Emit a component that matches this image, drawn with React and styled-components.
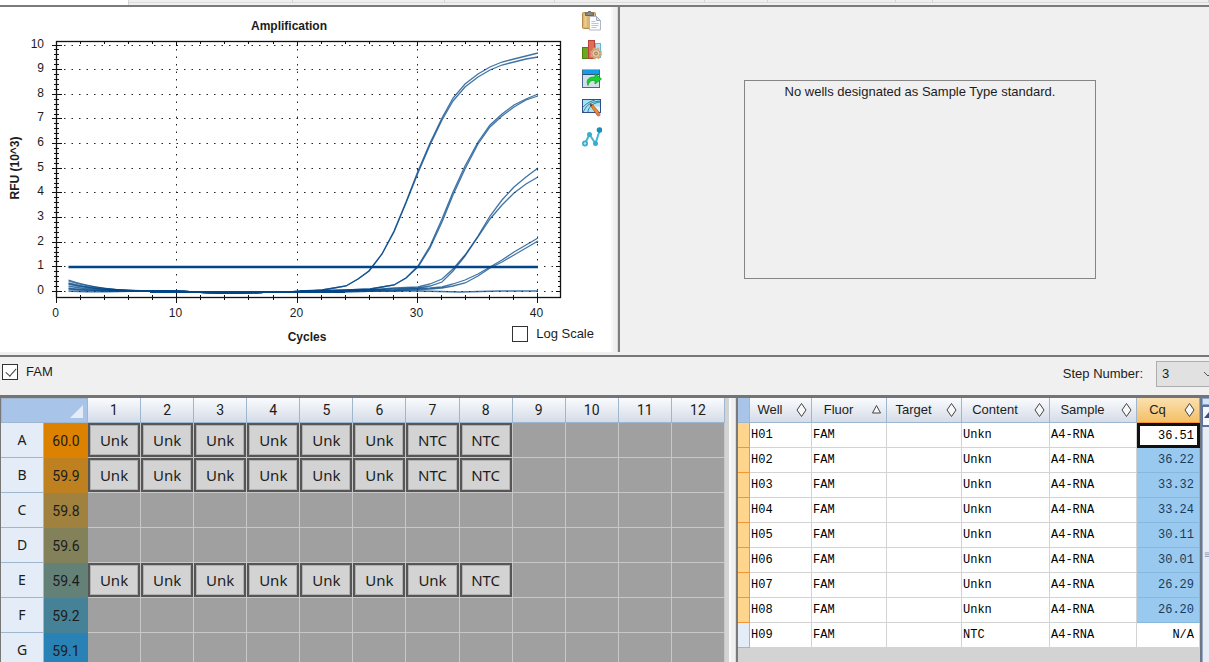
import React, { useState } from "react";
import styled, { createGlobalStyle } from "styled-components";

const GlobalStyle = createGlobalStyle`
  * {
    box-sizing: border-box;
  }
  body {
    margin: 0;
    background: #f0f0f0;
    color: #1c1c1c;
    font-family: "Liberation Sans", Arial, sans-serif;
    font-size: 13px;
    line-height: 16px;
  }
`;

const Window = styled.div`
  height: 100vh;
  display: flex;
  flex-direction: column;
  overflow: hidden;
`;
const TabStrip = styled.div`
  display: flex;
  flex: none;
  height: 5px;
  padding-bottom: 2px;
`;
const Tab = styled.div`
  flex: ${(p) => p.$grow} 1 0;
  height: ${(p) => (p.$active ? 5 : 3)}px;
  background: ${(p) => (p.$active ? "#fff" : "#efefef")};
  border-right: 1px solid #d4d4d4;
  border-bottom: ${(p) => (p.$active ? 0 : 1)}px solid #dcdcdc;
`;
const TopPanels = styled.div`
  display: grid;
  flex: none;
  grid-template-columns: minmax(0, 611fr) 7px minmax(0, 591fr);
  border-top: 2px solid #7a7a7a;
`;
const Splitter = styled.div`
  background: #f0f0f0;
  border-left: 2px solid #f9f9f9;
  border-right: 1px solid #dadada;
`;
const ChartPanel = styled.section`
  position: relative;
  display: flex;
  justify-content: space-between;
  background: #fff;
`;
const Plot = styled.svg`
  display: block;
  flex: none;
  font-family: "Liberation Sans", Arial, sans-serif;
  fill: #1c1c1c;
`;
const Tools = styled.div`
  display: flex;
  flex-direction: column;
  gap: 9px;
  padding: 4px 9px 0 0;
`;
const ToolButton = styled.button`
  width: 20px;
  height: 20px;
  padding: 0;
  border: 0;
  background: none;
  svg {
    display: block;
  }
`;
const LogScale = styled.div`
  position: absolute;
  right: 17px;
  bottom: 10px;
`;
const CheckLabel = styled.label`
  display: flex;
  align-items: center;
  gap: 8px;
`;
const Checkbox = styled.input`
  appearance: none;
  position: relative;
  flex: none;
  width: 16px;
  height: 16px;
  margin: 0;
  border: 1px solid #333;
  background: #fff;
  &:checked::after {
    content: "";
    position: absolute;
    left: 5px;
    top: 1px;
    width: 5px;
    height: 9px;
    border: solid #444;
    border-width: 0 1px 1px 0;
    transform: rotate(42deg);
  }
`;
const StandardPanel = styled.section`
  display: flex;
  justify-content: center;
  align-items: flex-start;
  padding: 73px 0 0 11px;
  border-left: 2px solid #7d7d7d;
`;
const Message = styled.p`
  width: 61%;
  height: 199px;
  margin: 0;
  padding-top: 3px;
  border: 1px solid #858585;
  text-align: center;
`;
const Toolbar = styled.div`
  display: flex;
  flex: none;
  align-items: center;
  justify-content: space-between;
  height: 37px;
  margin-top: 3px;
  padding: 0 0 6px 2px;
  border-top: 2px solid #777;
  overflow: hidden;
`;
const StepField = styled.div`
  display: flex;
  align-items: center;
  gap: 13px;
  margin: 4px -10px 0 0;
`;
const SelectBox = styled.div`
  position: relative;
  svg {
    position: absolute;
    right: 6px;
    top: 9px;
    pointer-events: none;
  }
`;
const Select = styled.select`
  appearance: none;
  display: block;
  width: 63px;
  height: 26px;
  padding: 0 5px;
  border: 1px solid #adadad;
  border-radius: 0;
  background: #e1e1e1;
  color: #1c1c1c;
  font: inherit;
`;
const Workspace = styled.div`
  display: grid;
  flex: 1;
  min-height: 0;
  grid-template-columns: minmax(0, 729fr) 7px minmax(0, 473fr);
  margin-top: 3px;
  border-top: 3px solid #747474;
`;
const PlatePanel = styled.section`
  overflow: hidden;
  border-left: 1px solid #777;
  background: #d3d3d3;
`;
const PlateTable = styled.table`
  width: calc(100% - 4px);
  table-layout: fixed;
  border-collapse: separate;
  border-spacing: 0;
  font-family: "Noto Sans", "Open Sans", sans-serif;
  font-size: 14px;
  line-height: 20px;
  text-align: center;
  th,
  td {
    padding: 0;
    font-weight: 400;
  }
`;
const Corner = styled.th`
  height: 25px;
  background: #a9c4e9;
  border: 1px solid #9eb6ce;
  svg {
    display: block;
    margin: 3px 3px 0 auto;
  }
`;
const ColumnHead = styled.th`
  height: 25px;
  background: linear-gradient(#f9fbfd, #d5dce8);
  border-right: 1px solid #9eb6ce;
  border-bottom: 1px solid #9eb6ce;
  font-family: Roboto, sans-serif;
`;
const RowHead = styled.th`
  height: 35px;
  background: #e4ecf7;
  border-right: 1px solid #9eb6ce;
  border-bottom: 1px solid #9eb6ce;
`;
const Temperature = styled.td`
  background: ${(p) => p.$color};
  font-family: Roboto, sans-serif;
`;
const WellCell = styled.td`
  height: 35px;
  background: #a0a0a0;
  border-right: 1px solid #c8c8c8;
  border-bottom: 1px solid #c8c8c8;
`;
const Well = styled.div`
  height: 34px;
  padding-top: 5px;
  border: 2px solid #565656;
  box-shadow: inset 0 0 0 1px #b0b0b0;
  background: #d3d3d3;
  font-size: 15px;
`;
const ResultsPanel = styled.section`
  display: flex;
  overflow: hidden;
  border-left: 2px solid #7a7a7a;
  background: #d3d3d3;
`;
const ResultsScroll = styled.div`
  flex: 1;
  min-width: 0;
`;
const ResultsTable = styled.table`
  width: 100%;
  table-layout: fixed;
  border-collapse: separate;
  border-spacing: 0;
`;
const SortHead = styled.th`
  height: 25px;
  padding: 0 4px 0 2px;
  background: ${(p) =>
    p.$active ? "linear-gradient(#fbe0b0, #f3c066)" : "linear-gradient(#f9fbfd, #d5dce8)"};
  border-right: 1px solid ${(p) => (p.$active ? "#f29536" : "#9eb6ce")};
  border-bottom: 1px solid ${(p) => (p.$active ? "#f29536" : "#9eb6ce")};
  font-weight: 400;
`;
const HeadContent = styled.div`
  display: flex;
  align-items: center;
  span {
    flex: 1;
    padding-right: 8px;
    text-align: center;
  }
`;
const Gutter = styled.th`
  padding: 0;
  background: ${(p) => (p.$head ? "#a9c4e9" : p.$selected ? "#ffd58d" : "#e4ecf7")};
  border-right: 1px solid ${(p) => (p.$selected ? "#f29536" : "#9eb6ce")};
  border-bottom: 1px solid ${(p) => (p.$selected ? "#f29536" : "#9eb6ce")};
`;
const Cell = styled.td`
  height: 25px;
  padding: 0 1px;
  background: #fff;
  border-right: 1px solid #d3d3d3;
  border-bottom: 1px solid #d3d3d3;
  color: #000;
  font-family: "Liberation Mono", "Courier New", monospace;
  font-size: 12px;
`;
const CqCell = styled(Cell)`
  padding-right: ${(p) => (p.$state === "focus" ? 3 : 5)}px;
  text-align: right;
  ${(p) =>
    p.$state === "selected" &&
    "background: #99c9ef; color: #173c5c; border-color: #86b7dc;"}
  ${(p) => p.$state === "focus" && "border: 3px solid #111;"}
`;
const ScrollBar = styled.div`
  display: flex;
  flex: none;
  flex-direction: column;
  width: 9px;
  border-left: 2px solid #6f7784;
  background: #e8edf5;
`;
const SplitGrip = styled.div`
  height: 7px;
  border: 1px solid #8aa6cf;
  border-right: 0;
  background: #d5e3f5;
`;
const ScrollUp = styled.button`
  height: 22px;
  padding: 0;
  border: solid #5d7199;
  border-width: 2px 0 2px 1px;
  background: #f4f7fb;
  overflow: hidden;
  svg {
    display: block;
  }
`;
const Thumb = styled.div`
  display: flex;
  flex: 1;
  align-items: center;
  padding-top: 20px;
  border-left: 1px solid #9aa9c4;
  background: #e6ecf6;
`;

const tabs = [129, 164, 152, 110, 150, 63, 128, 36, 277];

const curves = [
  "300,291 322,290 334,288 346,286 358,279 369,271 382,254 394,231 406,202 418,171 430,143 442,118 453,98 465,84 478,74 490,67 502,62 514,59 526,56 538,53",
  "300,292 322,290 334,288 346,286 358,279 369,271 382,254 394,232 406,203 418,173 430,145 442,120 453,101 465,87 478,77 490,70 502,65 514,62 526,59 538,57",
  "300,291 346,290 370,289 382,287 394,285 406,278 418,266 430,246 442,219 453,192 465,166 478,142 490,125 502,114 514,105 526,99 538,94",
  "300,292 346,290 370,289 382,287 394,285 406,278 418,267 430,248 442,222 453,195 465,169 478,144 490,127 502,116 514,107 526,100 538,96",
  "300,292 370,290 394,288 418,287 430,284 442,279 453,269 465,255 478,236 490,216 502,200 514,187 526,177 538,168",
  "300,292 370,290 394,289 418,288 430,286 442,282 453,271 465,256 478,237 490,219 502,205 514,193 526,184 538,177",
  "300,291 394,290 430,288 442,287 453,284 465,280 478,274 490,267 502,260 514,252 526,245 538,238",
  "300,292 394,291 430,289 442,288 453,286 465,283 478,276 490,268 502,262 514,255 526,248 538,241",
  "300,291 340,292 380,291 420,291 460,292 500,291 520,291 538,291",
];
const starts = [280, 281, 283, 284, 286, 288, 289, 291];

const plateRows = [
  { row: "A", temp: "60.0", color: "#dc8200", wells: ["Unk", "Unk", "Unk", "Unk", "Unk", "Unk", "NTC", "NTC"] },
  { row: "B", temp: "59.9", color: "#bf811f", wells: ["Unk", "Unk", "Unk", "Unk", "Unk", "Unk", "NTC", "NTC"] },
  { row: "C", temp: "59.8", color: "#a0813d", wells: [] },
  { row: "D", temp: "59.6", color: "#82815a", wells: [] },
  { row: "E", temp: "59.4", color: "#648178", wells: ["Unk", "Unk", "Unk", "Unk", "Unk", "Unk", "Unk", "NTC"] },
  { row: "F", temp: "59.2", color: "#468297", wells: [] },
  { row: "G", temp: "59.1", color: "#2882b5", wells: [] },
];
const plateColumns = [1, 2, 3, 4, 5, 6, 7, 8, 9, 10, 11, 12];

const resultColumns = ["Well", "Fluor", "Target", "Content", "Sample", "Cq"];
const results = [
  ["H01", "FAM", "", "Unkn", "A4-RNA", "36.51"],
  ["H02", "FAM", "", "Unkn", "A4-RNA", "36.22"],
  ["H03", "FAM", "", "Unkn", "A4-RNA", "33.32"],
  ["H04", "FAM", "", "Unkn", "A4-RNA", "33.24"],
  ["H05", "FAM", "", "Unkn", "A4-RNA", "30.11"],
  ["H06", "FAM", "", "Unkn", "A4-RNA", "30.01"],
  ["H07", "FAM", "", "Unkn", "A4-RNA", "26.29"],
  ["H08", "FAM", "", "Unkn", "A4-RNA", "26.20"],
  ["H09", "FAM", "", "NTC", "A4-RNA", "N/A"],
];

const PasteIcon = () => (
  <svg width="20" height="20" viewBox="0 0 20 20">
    <rect x="0.5" y="1.5" width="13" height="16" rx="1" fill="#dcb673" stroke="#b38a48" />
    <rect x="2.5" y="3" width="2" height="13" fill="#ecd09a" />
    <path d="M3.5 4.5V2h2l1-1.5h2L9.500 2h2v2.500z" fill="#8b8b86" stroke="#64645f" />
    <path d="M7.500 5.500h7l4 4v9.500h-11z" fill="#fbfcff" stroke="#b1b7c4" />
    <path d="M14.500 5.500v4h4z" fill="#dbe2ee" stroke="#a4adbd" />
    <path d="M9.500 10.500h4M9.500 12.500h7M9.500 14.500h7M9.500 16.500h5" stroke="#b9c5da" />
  </svg>
);
const ChartGearIcon = () => (
  <svg width="20" height="20" viewBox="0 0 20 20">
    <rect x="13.500" y="3.500" width="5" height="14" fill="#b8e3ef" stroke="#69b7cd" />
    <rect x="0.500" y="7.500" width="6" height="11" fill="#6aa81c" stroke="#4a8110" />
    <rect x="6.500" y="0.500" width="6" height="18" fill="#df6b5c" stroke="#b84438" />
    <circle cx="14" cy="13.500" r="5" fill="#dcb98c" stroke="#cfa878" strokeWidth="2" strokeDasharray="2 2" />
    <circle cx="14" cy="13.500" r="4" fill="#e8caa2" stroke="#c59c6c" />
    <circle cx="14" cy="13.500" r="1.500" fill="#aebfcf" stroke="#a07c52" />
  </svg>
);
const ExportIcon = () => (
  <svg width="20" height="20" viewBox="0 0 20 20">
    <rect x="0.500" y="1" width="17" height="17.500" fill="#d3e0ea" stroke="#4a6788" />
    <rect x="1" y="1" width="16" height="4" fill="#169bea" />
    <path d="M1 5.500h16" stroke="#275479" />
    <path d="M6 16.500C3.500 11 7 7.500 13 8V4.500l6.500 5.500-6.500 5v-3.500c-4-.5-6 1-7 5z" fill="#17d42c" stroke="#0b9b23" strokeWidth=".7" />
  </svg>
);
const PictureIcon = () => (
  <svg width="20" height="20" viewBox="0 0 20 20">
    <rect x="0.500" y="1.500" width="18" height="13" fill="#a9e2ee" stroke="#2f4d86" />
    <path d="M1 14C4 10 5 4 18 3M1 9c4-4 8-6 12-7M6 14c0-4 4-9 12-10" fill="none" stroke="#2b83a9" />
    <path d="M12 8l6 1v5h-5z" fill="#e2f5fa" />
    <path d="M8 7l2-1 7 8-2 3z" fill="#ef8632" stroke="#a8501c" strokeWidth=".7" />
    <path d="M7.500 6l1.500 2.500L10.500 7z" fill="#403a38" />
    <circle cx="16.500" cy="16.500" r="2" fill="#cf7c6d" />
  </svg>
);
const NodesIcon = () => (
  <svg width="20" height="20" viewBox="0 0 20 20">
    <path d="M3 16.500L7.500 7.500l6 9L17.500 4" fill="none" stroke="#46b4d2" strokeWidth="2" />
    <g fill="#3aaccd">
      <circle cx="3" cy="16.500" r="3" />
      <circle cx="7.500" cy="7.500" r="2.500" />
      <circle cx="13.500" cy="16.500" r="2.500" />
      <circle cx="17.500" cy="3" r="2.800" fill="#178fb8" />
    </g>
    <circle cx="3" cy="16.500" r="1.300" fill="#b5e4f1" />
  </svg>
);
const SortIcon = ({ ascending }) => (
  <svg width="11" height="16" viewBox="0 0 11 16" fill="#f7f7f7" stroke="#444">
    {ascending ? <path d="M5.500 3.500L9.500 11h-8z" /> : <path d="M5.500 1.500L10 8l-4.500 6.500L1 8z" />}
  </svg>
);

const tools = [
  ["Copy", PasteIcon],
  ["Chart settings", ChartGearIcon],
  ["Export", ExportIcon],
  ["Edit picture", PictureIcon],
  ["Trace style", NodesIcon],
];

const xAt = (cycle) => Math.round(56 + cycle * 12.03) + 0.5;
const yAt = (rfu) => Math.round(291 - rfu * 24.65) + 0.5;
const range = (n) => Array.from({ length: n }, (_, i) => i);

const AmplificationPlot = () => (
  <Plot width="575" height="345" viewBox="0 7 575 345">
    <g stroke="#222" strokeDasharray="1.5 6">
      {range(11).map((v) => (
        <path key={v} d={`M64 ${yAt(v)}H560`} />
      ))}
      {[10, 20, 30, 40].map((c) => (
        <path key={c} d={`M${xAt(c)} 49V297`} />
      ))}
    </g>
    <g stroke="#111">
      {range(51).map((i) => {
        const major = i % 5 === 0;
        const y = yAt(i / 5);
        return <path key={i} d={major ? `M52 ${y}H62M556 ${y}H560` : `M54 ${y}H59M558 ${y}H560`} />;
      })}
      {range(21).map((i) => {
        const major = i % 5 === 0;
        const x = xAt(i * 2);
        return <path key={i} d={major ? `M${x} 293V303M${x} 42V46` : `M${x} 295V300M${x} 42V44`} />;
      })}
    </g>
    <rect x="56.500" y="41.500" width="504" height="256" fill="none" stroke="#111" strokeWidth="1.300" />
    <g fill="none" stroke="#024687" strokeOpacity=".75" strokeWidth="1.300">
      {starts.map((y) => (
        <path key={y} d={`M68.500 ${y}C90 ${(y + 291) / 2 + 2} 120 291 155 291S200 293 235 293S285 291 345 291`} />
      ))}
      {curves.map((points) => (
        <polyline key={points} points={points} />
      ))}
    </g>
    <path d="M125 291H150M150 292H345" stroke="#024687" strokeWidth="2" />
    <path d="M68.500 267H538" stroke="#024687" strokeWidth="2.400" />
    <text x="289" y="30" textAnchor="middle" fontSize="12" fontWeight="700">
      Amplification
    </text>
    <g fontSize="12">
      {range(11).map((v) => (
        <text key={v} x="44" y={yAt(v) + 2.5} textAnchor="end">
          {v}
        </text>
      ))}
      {[0, 10, 20, 30, 40].map((c) => (
        <text key={c} x={xAt(c) - 1} y="317" textAnchor="middle">
          {c}
        </text>
      ))}
    </g>
    <g fontSize="12" fontWeight="700" textAnchor="middle">
      <text x="307" y="341">
        Cycles
      </text>
      <text transform="translate(19 168) rotate(-90)">RFU (10^3)</text>
    </g>
  </Plot>
);

const cqState = (index) => {
  if (index === 0) return "focus";
  return index < 8 ? "selected" : "plain";
};

const App = () => {
  const [logScale, setLogScale] = useState(false);
  const [fam, setFam] = useState(true);
  const [step, setStep] = useState("3");

  return (
    <Window>
      <GlobalStyle />
      <TabStrip>
        {tabs.map((grow, i) => (
          <Tab key={i} $grow={grow} $active={i === 0} />
        ))}
      </TabStrip>
      <TopPanels>
        <ChartPanel>
          <AmplificationPlot />
          <Tools>
            {tools.map(([name, ToolIcon]) => (
              <ToolButton key={name} aria-label={name}>
                <ToolIcon />
              </ToolButton>
            ))}
          </Tools>
          <LogScale>
            <CheckLabel>
              <Checkbox type="checkbox" checked={logScale} onChange={(e) => setLogScale(e.target.checked)} />
              Log Scale
            </CheckLabel>
          </LogScale>
        </ChartPanel>
        <Splitter />
        <StandardPanel>
          <Message>No wells designated as Sample Type standard.</Message>
        </StandardPanel>
      </TopPanels>
      <Toolbar>
        <CheckLabel>
          <Checkbox type="checkbox" checked={fam} onChange={(e) => setFam(e.target.checked)} />
          FAM
        </CheckLabel>
        <StepField>
          <label htmlFor="step">Step Number:</label>
          <SelectBox>
            <Select id="step" value={step} onChange={(e) => setStep(e.target.value)}>
              <option>3</option>
            </Select>
            <svg width="10" height="8" viewBox="0 0 10 8" fill="none" stroke="#555">
              <path d="M1 2l4 4 4-4" />
            </svg>
          </SelectBox>
        </StepField>
      </Toolbar>
      <Workspace>
        <PlatePanel>
          <PlateTable>
            <colgroup>
              <col width="43" />
              <col width="44" />
              {plateColumns.map((n) => (
                <col key={n} />
              ))}
            </colgroup>
            <thead>
              <tr>
                <Corner colSpan="2">
                  <svg width="14" height="14" viewBox="0 0 14 14" fill="#e4ecf7">
                    <path d="M13 0v13H0z" />
                  </svg>
                </Corner>
                {plateColumns.map((n) => (
                  <ColumnHead key={n}>{n}</ColumnHead>
                ))}
              </tr>
            </thead>
            <tbody>
              {plateRows.map(({ row, temp, color, wells }) => (
                <tr key={row}>
                  <RowHead>{row}</RowHead>
                  <Temperature $color={color}>{temp}</Temperature>
                  {plateColumns.map((n) => (
                    <WellCell key={n}>{wells[n - 1] && <Well>{wells[n - 1]}</Well>}</WellCell>
                  ))}
                </tr>
              ))}
            </tbody>
          </PlateTable>
        </PlatePanel>
        <Splitter />
        <ResultsPanel>
          <ResultsScroll>
            <ResultsTable>
              <colgroup>
                <col width="12" />
                <col width="62" />
                <col width="75" />
                <col width="75" />
                <col width="88" />
                <col width="87" />
                <col />
              </colgroup>
              <thead>
                <tr>
                  <Gutter $head />
                  {resultColumns.map((name) => (
                    <SortHead key={name} $active={name === "Cq"}>
                      <HeadContent>
                        <span>{name}</span>
                        <SortIcon ascending={name === "Fluor"} />
                      </HeadContent>
                    </SortHead>
                  ))}
                </tr>
              </thead>
              <tbody>
                {results.map((cells, i) => (
                  <tr key={cells[0]}>
                    <Gutter $selected={i < 8} />
                    {cells.slice(0, 5).map((text, c) => (
                      <Cell key={c}>{text}</Cell>
                    ))}
                    <CqCell $state={cqState(i)}>{cells[5]}</CqCell>
                  </tr>
                ))}
              </tbody>
            </ResultsTable>
          </ResultsScroll>
          <ScrollBar>
            <SplitGrip />
            <ScrollUp aria-label="Scroll up">
              <svg width="12" height="18" viewBox="0 0 12 18" fill="#3d4f73">
                <path d="M6 5l5 6H1z" />
              </svg>
            </ScrollUp>
            <Thumb>
              <svg width="10" height="10" viewBox="0 0 10 10" stroke="#5d7199">
                <path d="M3 1.500h7M3 4.500h7M3 7.500h7" />
              </svg>
            </Thumb>
          </ScrollBar>
        </ResultsPanel>
      </Workspace>
    </Window>
  );
};
export default App;
